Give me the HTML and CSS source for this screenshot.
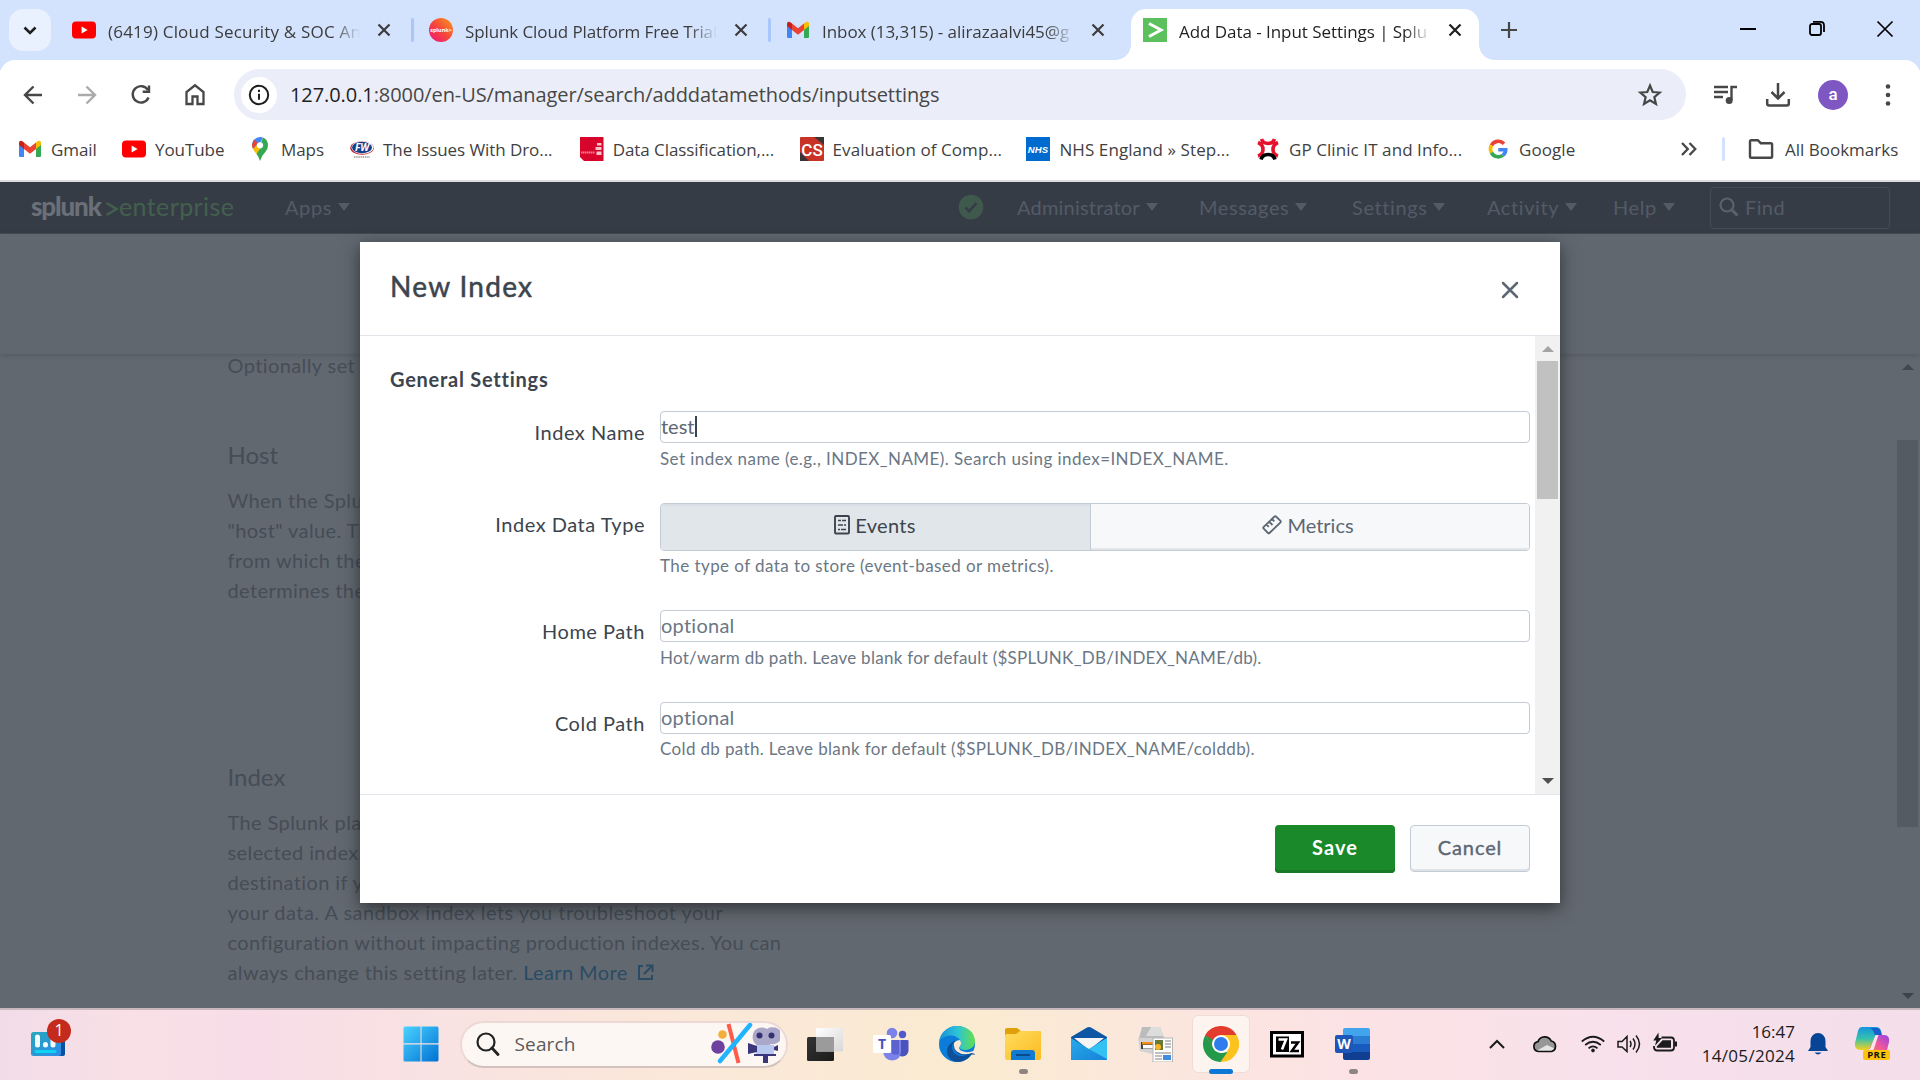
FILE: index.html
```html
<!DOCTYPE html>
<html lang="en">
<head>
<meta charset="utf-8">
<title>Add Data - Input Settings | Splunk</title>
<link rel="stylesheet" href="styles.css">
</head>
<body>
<svg class="defs" width="0" height="0">
  <defs>
    <symbol id="youtube" viewBox="0 0 24 24"><rect y="3.5" width="24" height="17" rx="4" fill="#f00"/><path d="M9.6 8.6v6.8l6-3.4z" fill="#fff"/></symbol>
    <symbol id="gmail" viewBox="0 0 24 24"><path d="M1 5v14q0 1 1.200 1H6V10z" fill="#4285f4"/><path d="M23 5v14q0 1-1.200 1H18V10z" fill="#34a853"/><path d="M18 5.500V12l5-4V6q0-3-3-2z" fill="#fbbc04"/><path d="M6 5.500V12L1 8V6q0-3 3-2z" fill="#c5221f"/><path d="M6 5.500V12l6 4.700 6-4.700V5.500l-6 4.700z" fill="#ea4335"/></symbol>
    <symbol id="close" viewBox="0 0 24 24"><path d="M6.500 6.500l11 11M17.500 6.500l-11 11" stroke="currentColor" stroke-width="2.200" fill="none"/></symbol>
  </defs>
</svg>
<div class="screen">
  <header class="tabstrip">
    <div class="tab-search"><svg width="24" height="24" viewBox="0 0 24 24"><path d="M6.500 9.500l5.500 5.500 5.500-5.500" fill="none" stroke="#1f1f1f" stroke-width="2.600"/></svg></div>
    <div class="tab">
      <svg width="24" height="24"><use href="#youtube"/></svg>
      <span class="tab-title sp-a">(6419) Cloud Security &amp; SOC An</span>
      <svg width="24" height="24"><use href="#close"/></svg>
      <i class="tab-sep"></i>
    </div>
    <div class="tab">
      <svg width="24" height="24" viewBox="0 0 24 24"><defs><linearGradient id="spl" x1="0" y1="1" x2="1" y2="0"><stop stop-color="#f0127c"/><stop offset=".5" stop-color="#f6483a"/><stop offset="1" stop-color="#f99d1c"/></linearGradient></defs><circle cx="12" cy="12" r="12" fill="url(#spl)"/><text x="12" y="14" text-anchor="middle" class="splunk-dot">splunk&gt;</text></svg>
      <span class="tab-title sp-b">Splunk Cloud Platform Free Trial</span>
      <svg width="24" height="24"><use href="#close"/></svg>
      <i class="tab-sep"></i>
    </div>
    <div class="tab">
      <svg width="24" height="24"><use href="#gmail"/></svg>
      <span class="tab-title">Inbox (13,315) - alirazaalvi45@g</span>
      <svg width="24" height="24"><use href="#close"/></svg>
    </div>
    <div class="tab tab-active">
      <svg width="24" height="24" viewBox="0 0 24 24"><rect width="24" height="24" fill="#5cc05c"/><path d="M6 5.500l12 6.500-12 6.500" fill="none" stroke="#fff" stroke-width="3"/></svg>
      <span class="tab-title">Add Data - Input Settings | Splu</span>
      <svg width="24" height="24"><use href="#close"/></svg>
    </div>
    <svg class="new-tab" width="24" height="24" viewBox="0 0 24 24"><path d="M12 4v16M4 12h16" stroke="#474747" stroke-width="2.200"/></svg>
    <div class="window-controls">
      <svg width="24" height="24" viewBox="0 0 24 24"><path d="M4 12h16" stroke="#000" stroke-width="2"/></svg>
      <svg width="24" height="24" viewBox="0 0 24 24"><rect x="5" y="7" width="11" height="11" rx="2" fill="none" stroke="#000" stroke-width="1.800"/><path d="M8 4.800h7.500q3.500 0 3.500 3.500V15" fill="none" stroke="#000" stroke-width="1.800"/></svg>
      <svg width="24" height="24" viewBox="0 0 24 24"><path d="M4.500 4.500l15 15M19.500 4.500l-15 15" stroke="#000" stroke-width="1.700"/></svg>
    </div>
  </header>

  <div class="toolbar">
    <div class="nav-buttons">
      <svg width="24" height="24" viewBox="0 0 24 24"><path d="M21 12H4.500M12.500 3.500L4 12l8.500 8.500" fill="none" stroke="#474747" stroke-width="2.400"/></svg>
      <svg width="24" height="24" viewBox="0 0 24 24"><path d="M3 12h16.500M11.500 3.500L20 12l-8.500 8.500" fill="none" stroke="#ababab" stroke-width="2.400"/></svg>
      <svg width="24" height="24" viewBox="0 0 24 24"><path d="M19.500 14.500A8.200 8.200 0 1 1 19 7.200" fill="none" stroke="#474747" stroke-width="2.400"/><path d="M21.200 2.500V10h-7.500V7.600h5.100V2.500z" fill="#474747"/></svg>
      <svg width="24" height="24" viewBox="0 0 24 24"><path d="M3.500 21V9L12 2.300 20.500 9v12h-6v-7.500h-5V21z" fill="none" stroke="#474747" stroke-width="2.300"/></svg>
    </div>
    <div class="address">
      <span class="site-info"><svg width="24" height="24" viewBox="0 0 24 24"><circle cx="12" cy="12" r="9.200" fill="none" stroke="#1f1f1f" stroke-width="2"/><path d="M12 10.800v6M12 6.800v2.200" stroke="#1f1f1f" stroke-width="2"/></svg></span>
      <span class="url"><b>127.0.0.1</b>:8000/en-US/manager/search/adddatamethods/inputsettings</span>
      <svg class="star" width="26" height="26" viewBox="0 0 24 24"><path d="M12 3.200l2.500 6 6.400.5-4.900 4.200 1.500 6.300L12 16.900l-5.500 3.300 1.500-6.300-4.900-4.200 6.400-.5z" fill="none" stroke="#474747" stroke-width="2"/></svg>
    </div>
    <div class="toolbar-actions">
      <svg width="26" height="26" viewBox="0 0 26 26"><path d="M2 5h14M2 10h14M2 15h9M19.500 18V5H25" fill="none" stroke="#474747" stroke-width="2.400"/><circle cx="17.200" cy="18.500" r="3.500" fill="#474747"/></svg>
      <svg width="26" height="26" viewBox="0 0 26 26"><path d="M13 1v15M6.500 10l6.500 6.500 6.500-6.500M2.200 17v4.500q0 2 2 2h17.600q2 0 2-2V17" fill="none" stroke="#474747" stroke-width="2.500"/></svg>
      <span class="avatar">a</span>
      <svg width="26" height="26" viewBox="0 0 26 26" fill="#474747"><circle cx="13" cy="4.500" r="2.300"/><circle cx="13" cy="13" r="2.300"/><circle cx="13" cy="21.500" r="2.300"/></svg>
    </div>
  </div>

  <nav class="bookmarks">
    <span class="bm"><svg width="24" height="24"><use href="#gmail"/></svg>Gmail</span>
    <span class="bm"><svg width="24" height="24"><use href="#youtube"/></svg>YouTube</span>
    <span class="bm"><svg width="24" height="24" viewBox="0 0 24 24"><path d="M4 8.500a8 8 0 0 1 2-5.800L12 9z" fill="#1a73e8"/><path d="M6 2.700Q8.500 0 12 0l3 .6L9 12 4.500 11z" fill="#4285f4"/><path d="M6 2.700L9.800 6 5 12Q4 10 4 8z" fill="#ea4335"/><path d="M15 .5q5 2 5 8 0 3-2.500 6.300-4 4-5.500 9.200-1-4-3.500-7z" fill="#34a853"/><path d="M5 12l5-5.500 2 5.500-3.500 4.800Q6 14 5 12z" fill="#fbbc04"/><circle cx="12" cy="8.300" r="3.100" fill="#fff"/></svg>Maps</span>
    <span class="bm"><svg width="24" height="24" viewBox="0 0 24 24"><ellipse cx="12" cy="11" rx="11.800" ry="6.800" fill="#c22734"/><ellipse cx="12.500" cy="10.500" rx="11" ry="6.300" fill="#fff"/><ellipse cx="12" cy="10.500" rx="10" ry="5.800" fill="#143f8c"/><text x="12" y="14" text-anchor="middle" class="fw">FW</text><path d="M4 20h16" stroke="#999" stroke-width="1.500" stroke-dasharray="1.500 .7"/></svg>The Issues With Dro...</span>
    <span class="bm"><svg width="24" height="24" viewBox="0 0 24 24"><path d="M0 0h23.500v24H4l-4-4z" fill="#d9042b"/><path d="M1 15.500h14" stroke="#ee8191" stroke-width="1.800" stroke-dasharray="1.500 .5"/><path d="M17 6h4.500v2.500H17zM15.500 10h6v3h-6zM16.500 14.500h5V18h-5z" fill="#f6c3cc"/></svg>Data Classification,...</span>
    <span class="bm bm-wide"><svg width="24" height="24" viewBox="0 0 24 24"><rect width="24" height="24" rx="1" fill="#c83227"/><path d="M0 15v9h9zM14 0h10v8z" fill="#3a3535"/><text x="12" y="18.500" text-anchor="middle" class="cs">CS</text></svg>Evaluation of Comp...</span>
    <span class="bm bm-wide"><svg width="24" height="24" viewBox="0 0 24 24"><rect width="24" height="24" fill="#006bcf"/><text x="12" y="15.500" text-anchor="middle" class="nhs">NHS</text></svg>NHS England » Step...</span>
    <span class="bm bm-wide"><svg width="24" height="24" viewBox="0 0 24 24" fill="none" stroke="#e5122c" stroke-width="3.600"><path d="M5.500 2q1.500 4.500 6.500 4.500T18.500 2M2 5.500q5 2 5 7T2 19M22 5.500q-5 2-5 7t5 6.500"/><path d="M5 22.500q1.500-5 7-5t7 5" stroke="#000"/></svg>GP Clinic IT and Info...</span>
    <span class="bm bm-wide"><svg width="24" height="24" viewBox="0 0 24 24" fill="none" stroke-width="3.600"><path d="M18 6.800A7.800 7.800 0 0 0 5.400 8.400" stroke="#ea4335"/><path d="M5.400 8.400a7.800 7.800 0 0 0 0 7.200" stroke="#fbbc04"/><path d="M5.400 15.600a7.800 7.800 0 0 0 11.400 2.800" stroke="#34a853"/><path d="M16.800 18.400q2.900-2.300 2.900-5.700H12.300" stroke="#4285f4"/></svg>Google</span>
    <svg width="20" height="20" viewBox="0 0 20 20"><path d="M3 4l5.800 6L3 16M10.500 4l5.800 6-5.800 6" fill="none" stroke="#474747" stroke-width="2.300"/></svg>
    <i class="bm-sep"></i>
    <span class="bm bm-all"><svg width="26" height="24" viewBox="0 0 26 24"><path d="M2 19.500v-15q0-1.300 1.300-1.300h6.500l3 3h10q1.300 0 1.300 1.300v12q0 1.300-1.300 1.300H3.300Q2 20.800 2 19.500z" fill="none" stroke="#474747" stroke-width="2.400"/></svg>All Bookmarks</span>
  </nav>

  <main class="page">
    <div class="splunk-bar">
      <span class="logo"><b>splunk</b><svg width="14" height="22" viewBox="0 0 14 22"><path d="M1.500 5l10 6-10 6" fill="none" stroke="#43604e" stroke-width="2.600"/></svg><span>enterprise</span></span>
      <span class="menu">Apps<i></i></span>
      <svg width="26" height="26" viewBox="0 0 26 26"><circle cx="13" cy="12" r="12.300" fill="#3f5a4c"/><path d="M7.500 12.500l3.700 3.700 7.300-8" fill="none" stroke="#363c46" stroke-width="2.500"/></svg>
      <span class="menu adm">Administrator<i></i></span>
      <span class="menu msg">Messages<i></i></span>
      <span class="menu set">Settings<i></i></span>
      <span class="menu act">Activity<i></i></span>
      <span class="menu hlp">Help<i></i></span>
      <span class="find"><svg width="20" height="20" viewBox="0 0 20 20"><circle cx="8" cy="8" r="6.500" fill="none" stroke="#5a616b" stroke-width="2.200"/><path d="M12.500 12.500l6 6" stroke="#5a616b" stroke-width="3"/></svg><span>Find</span></span>
    </div>
    <div class="wizard-head"></div>
    <div class="content">
      <div class="panel">
        <p class="optional-line">Optionally set</p>
        <h3 class="sec-host">Host</h3>
        <p class="para-host">When the Splunk<br>"host" value. The<br>from which the<br>determines the</p>
        <h3 class="sec-index">Index</h3>
        <p>The Splunk platform<br>selected index.<br>destination if you<br><span class="wide-line">your data. A sandbox index lets you troubleshoot your</span><br>configuration without impacting production indexes. You can<br>always change this setting later. <a>Learn More <svg width="17" height="17" viewBox="0 0 17 17"><path d="M6 2H2v13h13v-4M9 1.500h6.500V8M15 2L7 10" fill="none" stroke="#2a4b64" stroke-width="2"/></svg></a></p>
      </div>
      <div class="page-scroll"><i class="arrow-up"></i><i class="thumb"></i><i class="arrow-down"></i></div>
    </div>

    <section class="modal">
      <div class="modal-head">
        <h2>New Index</h2>
        <svg width="18" height="18" viewBox="0 0 18 18"><path d="M2 2l14 14M16 2L2 16" stroke="#5c6773" stroke-width="2.500" stroke-linecap="round"/></svg>
      </div>
      <div class="modal-body">
        <form class="form">
          <h4>General Settings</h4>
          <div class="row row-a">
            <label>Index Name</label>
            <div><div class="input typed">test<i class="cursor"></i></div><p class="help">Set index name (e.g., INDEX_NAME). Search using index=INDEX_NAME.</p></div>
          </div>
          <div class="row row-b">
            <label>Index Data Type</label>
            <div>
              <div class="toggle">
                <span class="opt on"><svg width="16" height="20" viewBox="0 0 16 20"><rect x="1" y="1" width="14" height="17.500" rx="1" fill="none" stroke="#3c444d" stroke-width="1.900"/><path d="M4 5.500h3M8 5.500h4M4 10h5M10 10h2M4 14.500h2M7 14.500h5" stroke="#3c444d" stroke-width="1.600"/></svg>Events</span>
                <span class="opt"><svg width="20" height="20" viewBox="0 0 20 20"><path d="M12.500 1.500q.8-.6 1.500 0l4.500 4.300q.6.700 0 1.500L7.500 18q-.8.600-1.500 0L1.500 13.500q-.6-.7 0-1.500zM4.500 9.500l2.300 2.300M7.200 6.800L10.500 10M10 4l2.300 2.300" fill="none" stroke="#5c6773" stroke-width="1.800"/></svg>Metrics</span>
              </div>
              <p class="help help-type">The type of data to store (event-based or metrics).</p>
            </div>
          </div>
          <div class="row row-a">
            <label>Home Path</label>
            <div><div class="input">optional</div><p class="help help-db">Hot/warm db path. Leave blank for default ($SPLUNK_DB/INDEX_NAME/db).</p></div>
          </div>
          <div class="row row-a">
            <label>Cold Path</label>
            <div><div class="input">optional</div><p class="help help-cold">Cold db path. Leave blank for default ($SPLUNK_DB/INDEX_NAME/colddb).</p></div>
          </div>
        </form>
        <div class="modal-scroll"><i class="arrow-up"></i><i class="thumb"></i><i class="arrow-down"></i></div>
      </div>
      <div class="modal-foot"><span class="btn save">Save</span><span class="btn cancel">Cancel</span></div>
    </section>
  </main>

  <footer class="taskbar">
    <div class="widgets">
      <svg width="36" height="36" viewBox="0 0 36 36"><defs><linearGradient id="wd" x1="0" y1="0" x2="1" y2="1"><stop stop-color="#24a9bd"/><stop offset="1" stop-color="#2f8be8"/></linearGradient></defs><rect x="24" y="6" width="11" height="24" rx="2" fill="#0c4fa0"/><rect x="1" y="6" width="30" height="24" rx="2.500" fill="url(#wd)"/><path d="M7.500 11v8M15.500 18.500v.5M23 12v7" stroke="#f4fcff" stroke-width="5" stroke-linecap="round"/><path d="M6 25.500h19" stroke="#0fd3f5" stroke-width="3" stroke-linecap="round"/></svg>
      <span class="badge">1</span>
    </div>
    <div class="task-slot start"><svg width="36" height="36" viewBox="0 0 36 36"><defs><linearGradient id="wn" x1="0" y1="0" x2="1" y2="1"><stop stop-color="#4ad2ff"/><stop offset="1" stop-color="#0072d3"/></linearGradient></defs><path d="M2 .5h15.500v16.800H.5V2Q.5.500 2 .500zM18.500.5H34q1.500 0 1.500 1.500v15.300h-17zM.5 18.500h17v17H2q-1.500 0-1.500-1.500zM18.500 18.500h17V34q0 1.500-1.500 1.500H18.500z" fill="url(#wn)"/></svg></div>
    <div class="search-box">
      <svg width="24" height="24" viewBox="0 0 24 24"><circle cx="10" cy="10" r="8.500" fill="none" stroke="#222" stroke-width="2.200"/><path d="M16 16l6 6.500" stroke="#222" stroke-width="2.800" stroke-linecap="round"/></svg>
      <span>Search</span>
      <svg class="search-art" width="70" height="42" viewBox="0 0 70 42"><path d="M18.500 1l10 39" stroke="#ff5b49" stroke-width="4"/><path d="M40 2L10 38" stroke="#20b4ff" stroke-width="4.500" stroke-linecap="round"/><circle cx="12.500" cy="11.500" r="4.300" fill="#f5ad3c"/><circle cx="8" cy="24" r="6.800" fill="#6d419f"/><path d="M43 11a9 8.500 0 0 1 14-5 9 8.500 0 1 1 4 15q-3 2-4 2H49q-8-3-6-12z" fill="#aaa7c9"/><circle cx="49.500" cy="12.500" r="3" fill="#343271"/><circle cx="61.500" cy="12.500" r="3" fill="#343271"/><path d="M46 22h18v9H46z" fill="#b7c7ed"/><path d="M38 20l9 3v6l-9 2zM64 24l4-2v6l-4-1zM44 31h22v2H44zM53 33h5v7h-5z" fill="#3b367c"/></svg>
    </div>
    <div class="task-slot first"><svg width="36" height="36" viewBox="0 0 36 36"><defs><linearGradient id="tv1" x1="0" y1="0" x2="1" y2="1"><stop stop-color="#333"/><stop offset="1" stop-color="#1c1c1c"/></linearGradient><linearGradient id="tv2" x1="0" y1="0" x2="1" y2="1"><stop stop-color="#fff"/><stop offset="1" stop-color="#d7d7d7"/></linearGradient></defs><rect y="11" width="27" height="24" rx="1.500" fill="url(#tv1)"/><rect x="9" y="2" width="27" height="23.500" rx="1" fill="url(#tv2)"/><rect x="9" y="11" width="18" height="14.500" fill="#9b9b9b"/></svg></div>
    <div class="task-slot"><svg width="36" height="36" viewBox="0 0 36 36"><circle cx="19" cy="7" r="5.300" fill="#7b83eb"/><circle cx="29.500" cy="8.500" r="3.700" fill="#5059c9"/><path d="M24 14h10.500q1 0 1 1v10q-1 5-6 5.500-4 0-6-3z" fill="#4b53bc"/><path d="M11 14h17v11q0 9-9 9.500-8-.5-9-9z" fill="#7b83eb"/><path d="M19 14h7v14q-3 1-7 0z" fill="#5c63cf"/><rect y="9" width="18" height="18" rx="1.500" fill="#fff"/><text x="9" y="23.200" text-anchor="middle" class="app-letter" fill="#4b53bc">T</text></svg></div>
    <div class="task-slot"><svg width="36" height="36" viewBox="0 0 36 36"><defs><linearGradient id="ed1" x1="0" y1=".5" x2="1" y2=".5"><stop stop-color="#1b90d8"/><stop offset=".5" stop-color="#2cc3d8"/><stop offset="1" stop-color="#63e04c"/></linearGradient></defs><circle cx="18" cy="18" r="18" fill="#0b7dd8"/><path d="M.3 15A18 18 0 0 1 18 0q17 1 18 15.500Q35.500 23 27 24q-7 0-6-3 2-3 0-7Q17 9 11 9.500 4 10 .3 15z" fill="url(#ed1)"/><path d="M17 14q-6 5-3 11 5 9 19 2-4 8-13 9-10 0-12-9-1-9 9-13z" fill="#0d4f98"/><path d="M16.500 14.500q-4 4 0 9 6 6 17 2l3-2v5h-4q-10 2-15-2-6-6-1-12z" fill="#0d4f98"/><path d="M20.800 20.500q-2.500 4 5.500 5.500 5 .5 8-1l2-4V28l-3.500-1q-9 3-15-1.500-4-4-2.500-9 2-2.500 5.500-2.500 2.500 3 0 6.500z" fill="#fae9d4"/></svg></div>
    <div class="task-slot"><svg width="36" height="36" viewBox="0 0 36 36"><defs><linearGradient id="fd" x1="0" y1="0" x2="1" y2="1"><stop stop-color="#ffdc5e"/><stop offset="1" stop-color="#fbbb22"/></linearGradient></defs><path d="M0 4q0-2 2-2h10l4 3h18q2 0 2 2v5H0z" fill="#e0a009"/><path d="M0 10q0-2 2-2h9l4-3h19q2 0 2 2v25q0 2-2 2H2q-2 0-2-2z" fill="url(#fd)"/><path d="M6 34v-7q0-3 3-3h18q3 0 3 3v7z" fill="#117bd1"/><path d="M11 29h14" stroke="#0b4a8b" stroke-width="2"/></svg><i class="run"></i></div>
    <div class="task-slot"><svg width="36" height="36" viewBox="0 0 36 36"><defs><linearGradient id="ml" x1="0" y1="0" x2="1" y2="1"><stop stop-color="#29a9ea"/><stop offset="1" stop-color="#1682d8"/></linearGradient></defs><path d="M0 11L16 1.500q2-1 4 0L36 11v10H0z" fill="#0c56a4"/><path d="M3 12h30L18 24z" fill="#f4f4f5"/><path d="M0 12l18 11L36 12v22H0z" fill="url(#ml)"/><path d="M36 12v21L18 23z" fill="#36c1f3"/></svg></div>
    <div class="task-slot"><svg width="36" height="36" viewBox="0 0 36 36"><path d="M5 1h18l4 11H2z" fill="#bcbcbc"/><path d="M14 1h9l3 9H9z" fill="#ddd"/><path d="M1 12h26v11l-12 5L3 25z" fill="#d2d2d2"/><path d="M4 16h16v7H4z" fill="#454545"/><path d="M5 16h13v2.500H5z" fill="#f38f19"/><path d="M6 19h13v3.500H6z" fill="#fff"/><rect x="16" y="12" width="19.500" height="24" fill="#fff" stroke="#b5b5b5"/><rect x="18" y="14" width="8" height="10" fill="#657b35"/><circle cx="21" cy="21" r="3" fill="#f8b521"/><path d="M28 15h6M28 18h6M28 21h6M18 27h16M18 30h7M18 33h7" stroke="#aaa" stroke-width="1.400"/><rect x="26" y="29" width="8" height="5" fill="#408cdd"/></svg></div>
    <div class="task-slot current"><svg width="36" height="36" viewBox="0 0 36 36"><path d="M2.400 9A18 18 0 0 1 33.600 9L18 10z" fill="#e33b2e"/><path d="M33.600 9A18 18 0 0 1 17.500 36l8.300-13.500L18 9z" fill="#fcc31e"/><path d="M17.500 36A18 18 0 0 1 2.400 9l8 13.500 7.600 4.500 6.500-1z" fill="#25994a"/><path d="M2.400 9L10 22l8-13z" fill="#e33b2e"/><path d="M2.400 9l7.800 13.500L14 25l-2-12z" fill="#25994a"/><path d="M2.400 9Q4 6 7 3.800L13 12l-3 2z" fill="#e33b2e"/><circle cx="18" cy="18" r="9" fill="#fff"/><circle cx="18" cy="18" r="7" fill="#2f7ded"/></svg><i class="run wide"></i></div>
    <div class="task-slot"><svg width="36" height="36" viewBox="0 0 36 36"><rect x="2.500" y="6.500" width="31" height="23.500" fill="#fff" stroke="#000" stroke-width="3"/><rect x="7" y="10.500" width="13" height="15.500" fill="#000"/><path d="M9.500 13.500H17L13 23.500" fill="none" stroke="#fff" stroke-width="2.600"/><path d="M22 16.500h7L22.800 25H30" fill="none" stroke="#000" stroke-width="2.500"/></svg></div>
    <div class="task-slot"><svg width="36" height="36" viewBox="0 0 36 36"><path d="M8 4q0-2 2-2h23q2 0 2 2v6H8z" fill="#41a5ee"/><path d="M8 10h27v8H8z" fill="#2b7cd3"/><path d="M8 18h27v8H8z" fill="#185abd"/><path d="M8 26h27v6q0 2-2 2H10q-2 0-2-2z" fill="#103f91"/><rect y="9" width="18" height="18" rx="2" fill="#1d56b8"/><text x="9" y="22.800" text-anchor="middle" class="app-letter" fill="#fff">W</text></svg><i class="run"></i></div>
    <div class="tray">
      <svg class="t-up" width="20" height="20" viewBox="0 0 20 20"><path d="M3 14l7-7 7 7" fill="none" stroke="#1b1b1b" stroke-width="2"/></svg>
      <svg width="24" height="24" viewBox="0 0 24 24"><path d="M5.500 19.500A5 5 0 0 1 5 9.600 7.200 7.200 0 0 1 18.200 9a5.400 5.400 0 0 1 .3 10.500z" fill="#979797"/><path d="M4 18.500L14 13l8.500 4q-1 2-4 2H6z" fill="#e4e4e4"/><path d="M5.500 19.500A5 5 0 0 1 5 9.600 7.200 7.200 0 0 1 18.200 9a5.400 5.400 0 0 1 .3 10.500z" fill="none" stroke="#111" stroke-width="1.700"/></svg>
      <svg class="t-wifi" width="24" height="24" viewBox="0 0 24 24" fill="none" stroke="#1b1b1b" stroke-width="1.700"><path d="M.8 9.500q11.200-9.500 22.400 0M4.200 13q7.800-6.500 15.600 0M7.500 16.300q4.500-3.800 9 0"/><circle cx="12" cy="18.500" r="1.400" fill="#1b1b1b" stroke-width="1"/></svg>
      <svg class="t-vol" width="24" height="24" viewBox="0 0 24 24" fill="none" stroke="#1b1b1b" stroke-width="1.500"><path d="M1 9.500v5.500h4l5 4.500v-15l-5 5zM13 9q2 3 0 6M16 6.500q4 5.500 0 11M19 3.500q7 8.500 0 17"/></svg>
      <svg width="24" height="24" viewBox="0 0 24 24"><path d="M8.500 5.500H18q3 0 3 3v7q0 3-3 3H4q-2.500 0-3-3V14" fill="none" stroke="#1b1b1b" stroke-width="1.800"/><path d="M9.500 8.300H18v7.500H3.800V14.500zM21.500 9.500h2.500v5h-2.500z" fill="#1b1b1b"/><path d="M5.500.5L.3 8.500h3L2 13.800 9 6H5.700z" fill="#1b1b1b"/></svg>
      <div class="clock"><span>16:47</span><span class="date">14/05/2024</span></div>
      <svg width="22" height="26" viewBox="0 0 22 26"><path d="M1 20l2.500-4V10a7.500 8 0 0 1 15 0v6L21 20zM7.500 21.500h7q-3.500 4-7 0z" fill="#064596"/></svg>
      <svg class="t-pilot" width="36" height="36" viewBox="0 0 36 36"><defs><linearGradient id="cp1" x1="0" y1="0" x2="0" y2="1"><stop stop-color="#1695dd"/><stop offset=".5" stop-color="#35c1b0"/><stop offset="1" stop-color="#f4d21c"/></linearGradient><linearGradient id="cp2" x1="0" y1="1" x2="1" y2="0"><stop stop-color="#f5873d"/><stop offset=".5" stop-color="#ee579c"/><stop offset="1" stop-color="#9440e8"/></linearGradient></defs><path d="M7 1h14q4 0 5 4l1 4h-6l-6 15H6q-7 0-6-7L3 5q1-4 4-4z" fill="url(#cp1)"/><path d="M15 2h6q4 0 5 4l1 4h-7q-1-6-5-8z" fill="#1660cc"/><path d="M21 9h8q6 0 5 7l-2 8q-1 3-4 3H15l-4-3q4 0 5-5z" fill="url(#cp2)"/><path d="M20.500 9h3l-5 15q-1 2-4 2l-3-2q4 0 5-5z" fill="#fbe3ee"/><rect x="8" y="24" width="27" height="10" rx="2" fill="#fcc30a"/><text x="21.700" y="32.400" text-anchor="middle" class="pre">PRE</text></svg>
    </div>
  </footer>
</div>
</body>
</html>
```
FILE: styles.css
```css
* { box-sizing: border-box; }
body { margin: 0; overflow: hidden; font-family: "Open Sans", "Noto Sans", sans-serif; }
h2, h3, h4, p { margin: 0; font-weight: 400; }
svg { display: block; flex: none; }
i { display: block; }
.defs { position: absolute; }
.screen { width: 1920px; height: 1080px; display: flex; flex-direction: column; background: #fff; overflow: hidden; }

/* Browser tabs */
.tabstrip { height: 70px; flex: none; margin-bottom: -10px; padding: 9px 0 10px 9px; display: flex; background: #d3e2fd; color: #3c3c3c; }
.tab-search { width: 42px; height: 42px; margin-right: 9px; border-radius: 14px; background: #e9f0fe; display: flex; align-items: center; justify-content: center; }
.tab { width: 357px; height: 51px; padding: 0 0 9px 12px; display: flex; align-items: center; }
.tab-title { width: 252px; margin: 3px 12px 0; font-size: 17px; line-height: 26px; letter-spacing: -.05px; white-space: nowrap; overflow: hidden; -webkit-mask-image: linear-gradient(90deg, #000 225px, transparent 252px); mask-image: linear-gradient(90deg, #000 225px, transparent 252px); }
.sp-a { letter-spacing: .2px; }
.sp-b { letter-spacing: -.1px; }
.tab-sep { width: 3px; height: 24px; margin-left: 15px; border-radius: 2px; background: #a8c7fa; }
.tab-active { width: 348px; position: relative; background: #fff; border-radius: 15px 15px 0 0; color: #1f1f1f; }
.tab-active::before, .tab-active::after { content: ""; position: absolute; bottom: 0; width: 15px; height: 15px; }
.tab-active::before { left: -15px; background: radial-gradient(circle at 0 0, #d3e2fd 14.500px, #fff 15px); }
.tab-active::after { right: -15px; background: radial-gradient(circle at 100% 0, #d3e2fd 14.500px, #fff 15px); }
.new-tab { margin: 9px 0 0 18px; }
.window-controls { margin: 8px 23px 0 auto; display: flex; gap: 44.500px; }

/* Toolbar */
.toolbar { position: relative; height: 60px; flex: none; display: flex; align-items: center; padding: 9px 18px 0 21px; background: #fff; border-radius: 15px 15px 0 0; }
.nav-buttons { width: 213px; display: flex; gap: 30px; }
.address { width: 1452px; height: 51px; padding: 0 23px 0 7px; display: flex; align-items: center; border-radius: 26px; background: #ebeef8; }
.site-info { width: 36px; height: 36px; border-radius: 50%; background: #fff; display: flex; align-items: center; justify-content: center; }
.url { margin-left: 13px; font-size: 20px; letter-spacing: -.08px; color: #474747; }
.url b { font-weight: 400; color: #1f1f1f; }
.star { margin-left: auto; }
.toolbar-actions { margin-left: 26px; display: flex; align-items: center; gap: 27px; }
.avatar { width: 30px; height: 30px; border-radius: 50%; background: #7e57c2; color: #fff; font: 500 17px/29px Roboto, sans-serif; text-align: center; }

/* Bookmarks */
.bookmarks { height: 62px; flex: none; padding: 0 0 2px 18px; display: grid; grid-template-columns: 104px 126px 102px 229.700px 219.900px 226.900px 229.500px 230px 193px 43px 26px 1fr; align-items: center; color: #3f3f3f; border-bottom: 2px solid #dcdddf; font-size: 17px; white-space: nowrap; }
.bm { display: flex; align-items: center; gap: 9px; letter-spacing: -.07px; }
.bm-wide { letter-spacing: .08px; }
.bm-sep { width: 3px; height: 24px; border-radius: 2px; background: #d3e2fd; }
.bm-all { gap: 11px; letter-spacing: 0; }
.splunk-dot { font: 700 5.500px "Open Sans", sans-serif; fill: #fff; }
.fw { font: italic 700 10px "Open Sans", sans-serif; fill: #fff; }
.cs { font: 500 17px Roboto, sans-serif; fill: #fff; }
.nhs { font: italic 700 9.500px "Liberation Sans", sans-serif; fill: #fff; }

/* Splunk page behind the dialog */
.page { position: relative; height: 826px; flex: none; display: flex; flex-direction: column; background: #61686f; font-family: Lato, "Open Sans", sans-serif; overflow: hidden; }
.splunk-bar { height: 52px; flex: none; padding-left: 31px; display: grid; grid-template-columns: 254px 673px 59px 182px 153px 135px 126px 97px 180px; align-items: center; background: #363c46; border-bottom: 1px solid #444b55; color: #535b66; font-size: 20px; white-space: nowrap; }
.logo { display: flex; align-items: center; font-size: 25px; line-height: 30px; color: #43604e; letter-spacing: .4px; margin-top: -3px; }
.logo b { width: 74px; font-size: 26px; font-weight: 900; color: #6a6f78; letter-spacing: -1.150px; }
.logo svg { margin-top: 5px; }
.menu { display: flex; align-items: center; gap: 6px; letter-spacing: .6px; margin-top: -2px; }
.menu.adm { letter-spacing: .2px; }
.menu i { margin-top: 1px; border: 6px solid transparent; border-top: 8px solid #535b66; border-bottom: 0; }
.find { height: 42px; padding-left: 8px; display: flex; align-items: center; gap: 6px; border: 1px solid #454c57; border-radius: 4px; letter-spacing: .4px; }
.find svg { margin-top: -2px; }
.find span { margin-top: -2px; }
.wizard-head { position: relative; height: 120px; flex: none; background: #60676f; box-shadow: 0 1px 5px rgba(40, 46, 56, .25); }
.content { height: 654px; display: flex; justify-content: space-between; }
.panel { width: 1499px; margin-left: 198px; padding-left: 29.500px; background: #626870; color: #454d57; font-size: 20px; line-height: 30px; letter-spacing: .4px; }
.panel h3 { font-size: 24px; line-height: 30px; }
.optional-line { margin-top: -4px; }
.wide-line { letter-spacing: .47px; }
.sec-host { margin-top: 60px; letter-spacing: 0; }
.para-host { margin-top: 15px; }
.sec-index { margin: 157px 0 15px; letter-spacing: 0; }
.panel a { color: #2a4b64; }
.panel a svg { display: inline-block; margin-left: 4px; vertical-align: -1px; }
.page-scroll { width: 25px; display: flex; flex-direction: column; align-items: center; padding: 10px 0 9px; }
.page-scroll .arrow-up { border-bottom-color: #424850; }
.page-scroll .arrow-down { border-top-color: #3d434b; }
.page-scroll .thumb { width: 21px; height: 387px; margin-top: 70px; background: #555b63; }
.arrow-up { border: 6px solid transparent; border-top: 0; border-bottom: 6px solid #a3a3a3; }
.arrow-down { margin-top: auto; border: 6px solid transparent; border-bottom: 0; border-top: 6px solid #505050; }

/* New Index dialog */
.modal { position: absolute; left: 360px; top: 60px; width: 1200px; height: 661px; background: #fff; box-shadow: 0 5px 16px rgba(0, 0, 0, .5); color: #3c444d; font-size: 20px; }
.modal-head { height: 94px; padding: 0 41px 0 30px; display: flex; align-items: center; justify-content: space-between; border-bottom: 1px solid #e1e4e8; }
.modal-head h2 { font-size: 28px; letter-spacing: 1.300px; -webkit-text-stroke: .5px; margin-top: -5px; }
.modal-head svg { margin-top: 3px; }
.modal-body { height: 458px; display: flex; justify-content: space-between; }
.form { width: 1140px; margin-left: 30px; padding-top: 29px; }
.form h4 { height: 46px; line-height: 29px; font-weight: 700; letter-spacing: .75px; }
.row { display: grid; grid-template-columns: 255px 870px; gap: 15px; }
.row-a { height: 92px; }
.row-b { height: 107px; }
.row label { text-align: right; line-height: 42px; letter-spacing: .52px; }
.input { height: 32px; display: flex; align-items: center; padding-bottom: 2px; line-height: 28px; border: 1px solid #c3cbd4; border-radius: 4px; color: #6b7785; letter-spacing: .25px; }
.typed { color: #5c6773; letter-spacing: 0; }
.cursor { width: 2px; height: 21px; background: #3c444d; }
.help { margin-top: 4px; font-size: 17px; line-height: 24px; letter-spacing: .43px; color: #6b7785; white-space: nowrap; }
.help-type { margin-top: 3px; }
.help-db { letter-spacing: .27px; }
.help-cold { margin-top: 3px; letter-spacing: .35px; }
.toggle { height: 48px; display: grid; grid-template-columns: 430px 438px; border: 1px solid #c3cbd4; border-radius: 4px; overflow: hidden; }
.opt { display: flex; align-items: center; justify-content: center; gap: 5px; padding: 0 4px 4px 0; background: #f7f8fa; color: #5c6773; box-shadow: inset 0 -2px #e3e6e9; }
.opt.on { padding-right: 1px; letter-spacing: .3px; background: #e1e6eb; color: #3c444d; border-right: 1px solid #c3cbd4; box-shadow: inset 0 2px #d7dee6; }
.modal-scroll { width: 25px; padding: 10px 0; display: flex; flex-direction: column; align-items: center; background: #f1f1f1; }
.modal-scroll .thumb { width: 21px; height: 138px; margin-top: 9px; background: #c1c1c1; }
.modal-foot { height: 109px; padding: 31px 30px 0; display: flex; justify-content: flex-end; gap: 15px; border-top: 1px solid #dfe5eb; }
.btn { width: 120px; height: 47px; line-height: 43px; text-align: center; border-radius: 4px; }
.save { height: 48px; margin-top: -1px; background: #1a8929; color: #fff; font-weight: 700; line-height: 45px; letter-spacing: 1.100px; box-shadow: inset 0 -3px #187a26; }
.cancel { margin-top: -1px; background: #f7f8fa; border: 1px solid #c3cbd4; color: #5c6773; letter-spacing: .9px; -webkit-text-stroke: .4px; box-shadow: inset 0 -2px #dfe3e8; }

/* Taskbar */
.taskbar { height: 72px; flex: none; padding-bottom: 2px; display: flex; align-items: center; border-top: 2px solid #c8b8bd; background: linear-gradient(90deg, #f1dce8 0, #f9e0e6 130px, #f8dde8 250px, #f9e1e4 390px, #fae7da 640px, #faebd1 980px, #fbe6de 1180px, #fce2e5 1360px, #f8e1eb 1600px, #f3deea 1920px); color: #1b1b1b; }
.widgets { position: relative; width: 74px; margin-left: 30px; }
.badge { position: absolute; left: 17px; top: -7px; width: 24px; height: 24px; border-radius: 50%; background: #c42b1c; color: #fff; font-size: 16px; line-height: 23px; text-align: center; }
.task-slot { position: relative; width: 66px; height: 58px; display: flex; align-items: center; justify-content: center; }
.start { width: 36px; margin-left: 298.500px; }
.search-box { width: 328px; height: 47px; margin: 0 4.500px 0 21px; padding: 0 6px 0 14px; display: flex; align-items: center; border: 2px solid #ecd9d6; border-bottom-color: #d2c1bc; border-radius: 24px; background: #fdf7f4; color: #5c5a5a; font-size: 19px; }
.search-box span { margin-left: 15px; letter-spacing: .15px; }
.search-art { margin-left: auto; }
.current::before { content: ""; position: absolute; inset: 0 4px; border: 1px solid #efdcd6; border-radius: 6px; background: #fdf4f0; }
.current svg { position: relative; }
.run { position: absolute; left: 28.500px; bottom: -1px; width: 9px; height: 5px; border-radius: 3px; background: #8f8580; }
.run.wide { left: 21px; width: 24px; background: #0a78d4; }
.app-letter { font: 700 14px "Open Sans", sans-serif; }
.pre { font: 700 9.500px "Open Sans", sans-serif; letter-spacing: .5px; fill: #111; }
.tray { margin-left: 101px; display: flex; align-items: center; }
.t-up { margin-right: 26px; }
.t-wifi { margin: 0 12px 0 24px; }
.t-vol { margin-right: 12px; }
.clock { width: 118px; margin-right: 12px; display: flex; flex-direction: column; align-items: flex-end; font-size: 17px; line-height: 24px; }
.date { letter-spacing: .3px; }
.t-pilot { margin-left: 26px; }
```
